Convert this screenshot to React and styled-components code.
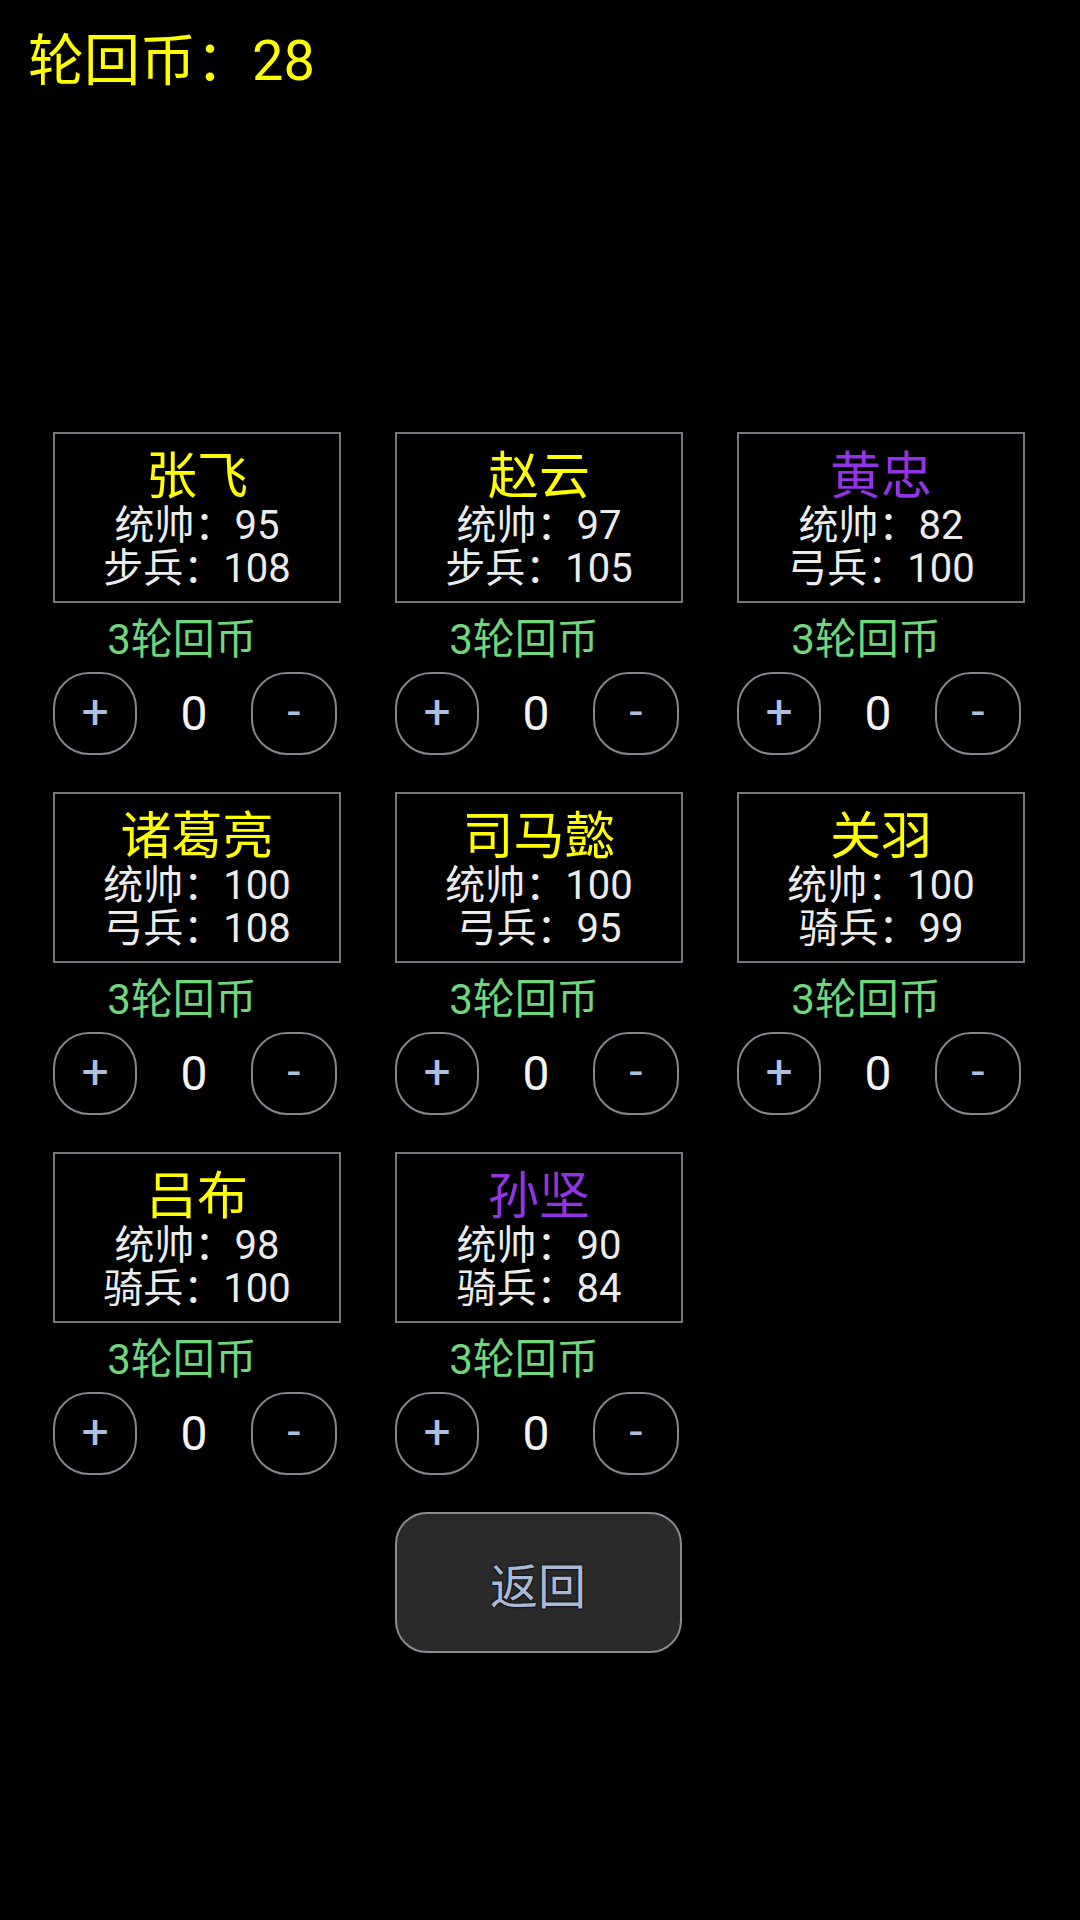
import React from "react";
import styled, { createGlobalStyle } from "styled-components";

const GlobalStyle = createGlobalStyle`
  html, body {
    margin: 0;
    padding: 0;
    background: #000;
  }
  body {
    font-family: Roboto, "Noto Sans CJK SC", sans-serif;
  }
`;

const Page = styled.div`
  width: 1080px;
  min-height: 1920px;
  background: #000;
  display: flex;
  flex-direction: column;
`;

const Coins = styled.div`
  color: #ffff00;
  font-size: 56px;
  line-height: 67px;
  padding: 28px 0 0 28px;
`;

const Grid = styled.div`
  margin-top: 337px;
  padding: 0 53px;
  display: grid;
  grid-template-columns: repeat(3, 288px);
  column-gap: 54px;
  row-gap: 37px;
`;

const Cell = styled.div`
  display: flex;
  flex-direction: column;
`;

const Card = styled.div`
  box-sizing: border-box;
  height: 171px;
  border: 2px solid #76767c;
  padding-top: 16px;
  display: flex;
  flex-direction: column;
  align-items: center;
`;

const Name = styled.div`
  color: ${(p) => (p.$purple ? "#9333e6" : "#ffff00")};
  font-size: 51px;
  line-height: 54px;
`;

const Stat = styled.div`
  color: #ececec;
  font-size: 40px;
  line-height: 43px;
`;

const Price = styled.div`
  color: #6fd67c;
  font-size: 42px;
  line-height: 50px;
  margin-top: 12px;
  padding-right: 30px;
  text-align: center;
`;

const Controls = styled.div`
  margin-top: 7px;
  padding-right: 4px;
  display: flex;
  align-items: center;
  justify-content: space-between;
`;

const RoundButton = styled.button`
  box-sizing: border-box;
  width: ${(p) => (p.$wide ? "86px" : "84px")};
  height: 83px;
  border: 2px solid #85858c;
  border-radius: 36px;
  background: #000;
  color: #aebfe0;
  font-family: Roboto, "Noto Sans CJK SC", sans-serif;
  font-size: 48px;
  line-height: 1;
  padding: 0 0 4px;
  display: flex;
  align-items: center;
  justify-content: center;
`;

const Count = styled.div`
  color: #f4f4f4;
  font-size: 48px;
  line-height: 83px;
`;

const BackButton = styled.button`
  align-self: center;
  margin: 37px 4px 0 0;
  box-sizing: border-box;
  width: 287px;
  height: 141px;
  border: 2px solid #8a8a90;
  border-radius: 32px;
  background: #2a2a2a;
  color: #aab9d8;
  font-family: Roboto, "Noto Sans CJK SC", sans-serif;
  font-size: 48px;
  text-shadow: 0 0 2px #000, 0 0 2px #000;
`;

const heroes = [
  { name: "张飞", lead: 95, kind: "步兵", val: 108 },
  { name: "赵云", lead: 97, kind: "步兵", val: 105 },
  { name: "黄忠", lead: 82, kind: "弓兵", val: 100, purple: true },
  { name: "诸葛亮", lead: 100, kind: "弓兵", val: 108 },
  { name: "司马懿", lead: 100, kind: "弓兵", val: 95 },
  { name: "关羽", lead: 100, kind: "骑兵", val: 99 },
  { name: "吕布", lead: 98, kind: "骑兵", val: 100 },
  { name: "孙坚", lead: 90, kind: "骑兵", val: 84, purple: true },
];

function HeroCell({ hero }) {
  return (
    <Cell>
      <Card>
        <Name $purple={hero.purple}>{hero.name}</Name>
        <Stat>统帅：{hero.lead}</Stat>
        <Stat>
          {hero.kind}：{hero.val}
        </Stat>
      </Card>
      <Price>3轮回币</Price>
      <Controls>
        <RoundButton>+</RoundButton>
        <Count>0</Count>
        <RoundButton $wide>-</RoundButton>
      </Controls>
    </Cell>
  );
}

export default function App() {
  return (
    <Page>
      <GlobalStyle />
      <Coins>轮回币：28</Coins>
      <Grid>
        {heroes.map((h) => (
          <HeroCell key={h.name} hero={h} />
        ))}
      </Grid>
      <BackButton>返回</BackButton>
    </Page>
  );
}
